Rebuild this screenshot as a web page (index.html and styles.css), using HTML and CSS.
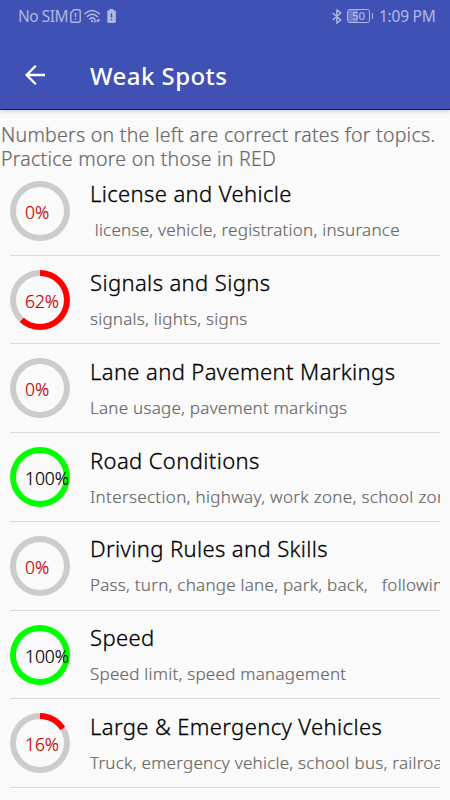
FILE: index.html
```html
<!DOCTYPE html>
<html lang="en">
<head>
<meta charset="utf-8">
<title>Weak Spots</title>
<link rel="stylesheet" href="styles.css">
</head>
<body>
<header class="top">
  <div class="status">
    <span class="carrier">No SIM</span>
    <svg class="sim" width="11" height="14" viewBox="0 0 11 14"><path d="M3.8.8H9a1.2 1.2 0 0 1 1.2 1.2v10A1.2 1.2 0 0 1 9 13.2H2A1.2 1.2 0 0 1 .8 12V4z" fill="none" stroke="currentColor" stroke-width="1.4"/><path d="M5.5 4v4M5.5 9.3v1.5" stroke="currentColor" stroke-width="1.5"/></svg>
    <svg class="wifi" width="17" height="14" viewBox="0 0 17 14"><path d="M1 4.8Q8 -1.8 15.5 4.8M3.4 7.5Q8.3 3 13.3 7.5M5.8 10Q8.2 7.8 10.6 10" fill="none" stroke="currentColor" stroke-width="1.5" stroke-linecap="round"/><circle cx="8" cy="12.2" r="1.1" fill="currentColor"/><path d="M11 10.5v3M14.5 10v3M12.5 12l3-1" stroke="currentColor" stroke-width="1.4"/></svg>
    <svg class="cell" width="9" height="14" viewBox="0 0 9 14"><path d="M2.5 0h4v1.6H8q.8 0 .8.9v10.3q0 1.2-1.2 1.2H1.5Q.3 14 .3 12.8V2.5q0-.9.8-.9h1.4z" fill="currentColor"/><path d="M4.5 4.2v4.3M4.5 9.8v1.5" stroke="#3f51b5" stroke-width="1.4"/></svg>
    <span class="space"></span>
    <svg class="bt" width="10" height="15" viewBox="0 0 10 15"><path d="M.8 4l8 7-3.9 3.2V.8L8.8 4l-8 7" fill="none" stroke="currentColor" stroke-width="1.4" stroke-linejoin="round"/></svg>
    <span class="battery">50</span><i class="nub"></i>
    <span class="clock">1:09 PM</span>
  </div>
  <div class="bar">
    <svg class="back" width="22" height="22" viewBox="0 0 22 22"><path d="M21 11H2.5M11.8 1.8L2.6 11l9.2 9.2" fill="none" stroke="currentColor" stroke-width="2.3"/></svg>
    <h1>Weak Spots</h1>
  </div>
</header>
<main>
  <p class="intro">Numbers on the left are correct rates for topics.<br>Practice more on those in RED</p>
  <ul class="topics">
    <li><div class="ring none"><b>0%</b></div><div class="text"><h2>License and Vehicle</h2><p> &nbsp;license, vehicle, registration, insurance</p></div></li>
    <li><div class="ring weak" style="--rate:62%"><b>62%</b></div><div class="text"><h2>Signals and Signs</h2><p>signals, lights, signs</p></div></li>
    <li><div class="ring none"><b>0%</b></div><div class="text"><h2>Lane and Pavement Markings</h2><p>Lane usage, pavement markings</p></div></li>
    <li><div class="ring full"><b>100%</b></div><div class="text"><h2>Road Conditions</h2><p class="loose">Intersection, highway, work zone, school zone</p></div></li>
    <li><div class="ring none"><b>0%</b></div><div class="text"><h2>Driving Rules and Skills</h2><p>Pass, turn, change lane, park, back<span class="wide">,</span>following</p></div></li>
    <li><div class="ring full"><b>100%</b></div><div class="text"><h2>Speed</h2><p>Speed limit, speed management</p></div></li>
    <li><div class="ring weak" style="--rate:16%"><b>16%</b></div><div class="text"><h2>Large &amp; Emergency Vehicles</h2><p>Truck, emergency vehicle, school bus, railroad</p></div></li>
  </ul>
</main>
</body>
</html>
```

FILE: styles.css
```css
* { box-sizing: border-box; margin: 0; padding: 0; }
body {
  width: 450px;
  height: 800px;
  overflow: hidden;
  background: #fafafa;
  font-family: "Noto Sans", "Open Sans", sans-serif;
  font-weight: 300;
}
.top {
  height: 110px;
  background: #3f51b5;
  border-bottom: 1px solid #001589;
  box-shadow: 0 1px 5px rgba(0, 0, 0, .2);
  color: #fff;
}
.status {
  display: flex;
  align-items: center;
  height: 32px;
  padding: 0 15px 0 18px;
  color: #b1b9e2;
  font-size: 16px;
  font-weight: 400;
  white-space: nowrap;
}
.carrier { width: 51px; font-size: 15.5px; letter-spacing: -.5px; }
.sim { margin-left: 1px; }
.wifi { margin-left: 3px; }
.cell { margin-left: 6px; }
.space { flex: 1; }
.battery {
  width: 23px;
  height: 14px;
  margin-left: 5px;
  border: 1px solid currentColor;
  border-radius: 3px;
  background: linear-gradient(90deg, #6c79c7 50%, transparent 50%);
  font-size: 11.5px;
  font-weight: 500;
  line-height: 12px;
  text-align: center;
}
.nub { width: 1px; height: 6px; margin-left: 2px; background: currentColor; }
.clock { width: 56px; margin-left: 6px; font-size: 15.5px; letter-spacing: -.25px; }
.bar { display: flex; align-items: center; height: 77px; padding: 9px 0 0 24px; }
.back { margin-right: 44px; }
h1 { padding-top: 2px; font-size: 24px; font-weight: 500; line-height: 32px; letter-spacing: .45px; }
.intro {
  height: 56.9px;
  padding: 13px 0 0 1px;
  color: #686868;
  font-size: 19.5px;
  line-height: 24px;
  letter-spacing: .27px;
  white-space: nowrap;
  -webkit-text-stroke: .2px;
}
.topics { list-style: none; padding: 0 10px; }
li {
  display: flex;
  height: 88.75px;
  border-bottom: 1.5px solid #d9d9d9;
}
.ring {
  flex: none;
  position: relative;
  width: 60px;
  height: 60px;
  margin-top: 14px;
  border-radius: 50%;
  background: #ccc;
}
.ring::before {
  content: "";
  position: absolute;
  inset: 6px;
  border-radius: 50%;
  background: #fafafa;
}
.ring.weak { background: conic-gradient(#f00 var(--rate), #ccc 0); }
.ring.full { background: #0f0; }
.ring b {
  position: absolute;
  left: 15px;
  top: 19px;
  color: #c80000;
  font-size: 17.5px;
  font-weight: 300;
  line-height: 24px;
  letter-spacing: -.1px;
  -webkit-text-stroke: .2px;
}
.ring.full b { color: #000; }
.text {
  flex: 1;
  min-width: 0;
  margin-left: 20px;
  overflow: hidden;
  white-space: nowrap;
}
h2 {
  margin-top: 10.5px;
  color: #000;
  font-size: 22px;
  font-weight: 300;
  line-height: 32px;
  letter-spacing: .38px;
  -webkit-text-stroke: .3px;
}
.text p {
  margin-top: 9px;
  color: #686868;
  font-size: 17px;
  line-height: 24px;
  letter-spacing: .25px;
  -webkit-text-stroke: .2px;
}
.text .loose { letter-spacing: .33px; }
.wide { display: inline-block; width: 18px; }
```
